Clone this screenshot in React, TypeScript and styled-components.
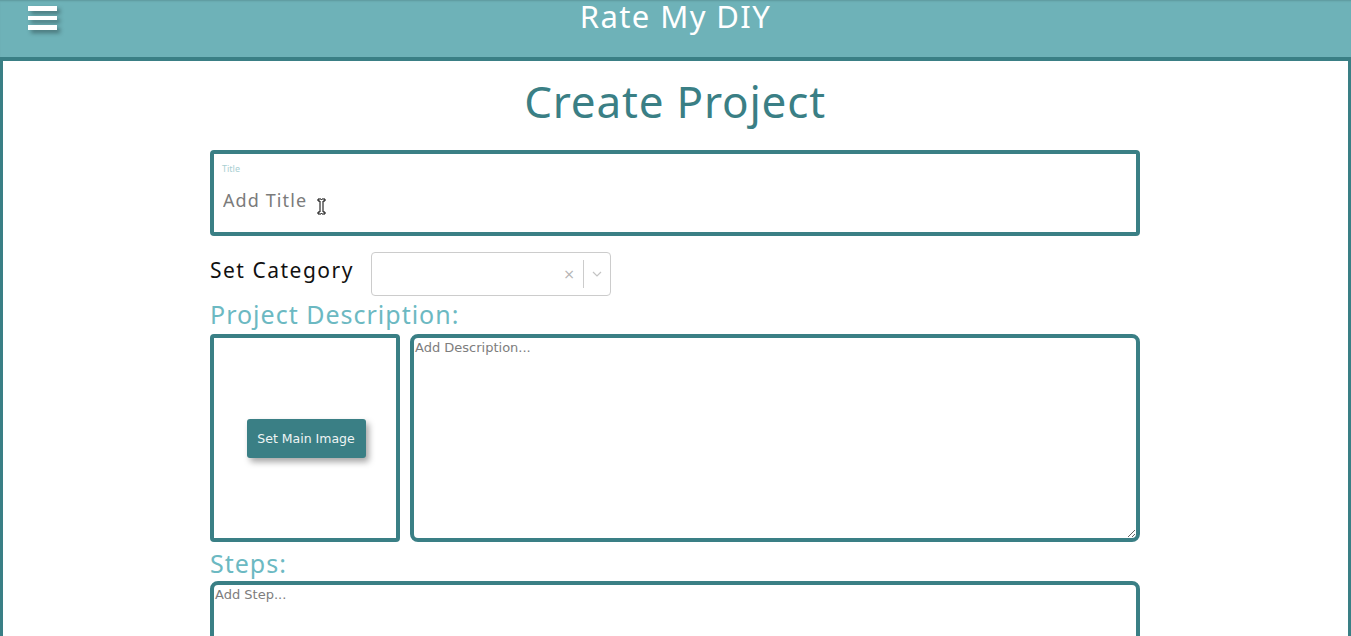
import React from "react";
import styled, { createGlobalStyle } from "styled-components";

const DARK = "#3a7f85";
const LIGHT = "#6eb2b8";
const LABEL = "#6cb9c2";
const HEAD_FONT = `"Noto Sans", "Open Sans", sans-serif`;
const UI_FONT = `"DejaVu Sans", sans-serif`;

const Global = createGlobalStyle`
  html, body { margin: 0; padding: 0; background: #fff; overflow: hidden; }
  body { font-family: ${HEAD_FONT}; }
  * { box-sizing: border-box; }
`;

const Page = styled.div`
  display: flex;
  flex-direction: column;
  height: 636px;
`;

const Header = styled.header`
  display: grid;
  grid-template-columns: 1fr auto 1fr;
  height: 61px;
  background: ${LIGHT};
  border-bottom: 4px solid ${DARK};
  box-shadow: inset 0 2px 2px -1px rgba(0, 0, 0, 0.15);
`;

const Burger = styled.button`
  justify-self: start;
  align-self: start;
  margin: 6px 0 0 28px;
  padding: 0;
  border: none;
  background: none;
  width: 29px;
  display: flex;
  flex-direction: column;
  gap: 5px;
  filter: drop-shadow(3px 3px 2px rgba(0, 0, 0, 0.35));
`;

const Bar = styled.span`
  display: block;
  height: 4.5px;
  background: #fff;
`;

const Brand = styled.h1`
  margin: 0;
  padding-top: 1px;
  font-family: ${HEAD_FONT};
  font-weight: 400;
  font-size: 31px;
  line-height: 31px;
  color: #fff;
  letter-spacing: 1.4px;
`;

const Main = styled.main`
  flex: 1;
  display: flex;
  justify-content: center;
  align-items: flex-start;
  padding-right: 1px;
  border-left: 3px solid ${DARK};
  border-right: 3px solid ${DARK};
  overflow: hidden;
`;

const Form = styled.form`
  flex: none;
  width: 930px;
  display: flex;
  flex-direction: column;
`;

const PageTitle = styled.h2`
  margin: 10px 0 0;
  text-align: center;
  font-family: ${HEAD_FONT};
  font-weight: 400;
  font-size: 44px;
  line-height: 60px;
  letter-spacing: 0.8px;
  color: ${DARK};
`;

const TitleField = styled.label`
  position: relative;
  display: flex;
  flex-direction: column;
  margin-top: 19px;
  height: 86px;
  border: 4px solid ${DARK};
  border-radius: 4px;
  padding: 10px 8px 0 8px;
`;

const TinyLabel = styled.span`
  font-family: ${HEAD_FONT};
  font-size: 9px;
  line-height: 10px;
  color: #a9cfd2;
`;

const TitleInput = styled.input`
  margin-top: 14px;
  border: none;
  outline: none;
  padding: 0 1px;
  font-family: ${HEAD_FONT};
  font-size: 18px;
  line-height: 24px;
  letter-spacing: 1.1px;
  color: #333;
  background: transparent;
  &::placeholder { color: #7b7b7b; }
`;

const Cursor = styled.svg`
  position: absolute;
  left: 103px;
  top: 44px;
`;

const CategoryRow = styled.div`
  display: flex;
  align-items: center;
  gap: 17px;
  margin-top: 16px;
`;

const CategoryLabel = styled.span`
  font-family: ${HEAD_FONT};
  font-size: 21px;
  letter-spacing: 1.5px;
  color: #111;
  margin-top: -8px;
`;

const Select = styled.div`
  width: 240px;
  height: 44px;
  border: 1px solid #cccccc;
  border-radius: 4px;
  display: flex;
  align-items: center;
  justify-content: flex-end;
  padding-right: 8px;
`;

const Clear = styled.span`
  font-family: ${UI_FONT};
  font-size: 14px;
  color: #b3b3b3;
  padding: 0 8px;
`;

const Sep = styled.span`
  width: 1px;
  height: 28px;
  background: #cccccc;
  margin-right: 8px;
`;

const SectionLabel = styled.h3<{ $gap?: number }>`
  margin: ${(p) => p.$gap ?? 0}px 0 0;
  font-family: ${HEAD_FONT};
  font-weight: 400;
  font-size: 25px;
  line-height: 36px;
  letter-spacing: 1px;
  color: ${LABEL};
`;

const DescRow = styled.div`
  display: flex;
  gap: 10px;
  height: 208px;
  margin-top: 2px;
`;

const ImageBox = styled.div`
  flex: none;
  width: 190px;
  border: 4px solid ${DARK};
  border-radius: 4px;
  display: flex;
  align-items: center;
  justify-content: center;
`;

const ImageButton = styled.button`
  margin-left: 2px;
  margin-top: 0;
  width: 119px;
  height: 39px;
  border: none;
  border-radius: 3px;
  background: ${DARK};
  color: #eef4f4;
  font-family: ${UI_FONT};
  font-size: 12.5px;
  box-shadow: 3px 4px 6px rgba(0, 0, 0, 0.35);
`;

const TextArea = styled.textarea<{ $grow?: boolean; $h?: number }>`
  margin: 0;
  display: block;
  min-width: 0;
  ${(p) => (p.$grow ? "flex: 1 1 0; width: auto;" : "width: 100%;")}
  ${(p) => (p.$h ? `height: ${p.$h}px; flex: none;` : "")}
  border: 4px solid ${DARK};
  border-radius: 8px;
  padding: 2px 1px;
  resize: vertical;
  font-family: ${UI_FONT};
  font-size: 13px;
  color: #333;
  outline: none;
  &::placeholder { color: #7d7d7d; }
`;

export default function App() {
  return (
    <Page>
      <Global />
      <Header>
        <Burger type="button" aria-label="menu">
          <Bar />
          <Bar />
          <Bar />
        </Burger>
        <Brand>Rate My DIY</Brand>
        <span />
      </Header>
      <Main>
        <Form onSubmit={(e) => e.preventDefault()}>
          <PageTitle>Create Project</PageTitle>
          <TitleField>
            <TinyLabel>Title</TinyLabel>
            <TitleInput placeholder="Add Title" />
            <Cursor width="9" height="17" viewBox="0 0 9 17">
              <path
                d="M1 1h3l0.5 0.5 0.5-0.5h3v2h-2v11h2v2h-3l-0.5-0.5-0.5 0.5h-3v-2h2v-11h-2z"
                fill="#fff"
                stroke="#000"
                strokeWidth="1"
              />
            </Cursor>
          </TitleField>
          <CategoryRow>
            <CategoryLabel>Set Category</CategoryLabel>
            <Select>
              <Clear>×</Clear>
              <Sep />
              <svg width="10" height="6" viewBox="0 0 10 6">
                <path d="M1 1l4 4 4-4" fill="none" stroke="#c4c4c4" strokeWidth="1.2" />
              </svg>
            </Select>
          </CategoryRow>
          <SectionLabel>Project Description:</SectionLabel>
          <DescRow>
            <ImageBox>
              <ImageButton type="button">Set Main Image</ImageButton>
            </ImageBox>
            <TextArea placeholder="Add Description..." $grow />
          </DescRow>
          <SectionLabel $gap={3}>Steps:</SectionLabel>
          <TextArea placeholder="Add Step..." $h={120} />
        </Form>
      </Main>
    </Page>
  );
}
